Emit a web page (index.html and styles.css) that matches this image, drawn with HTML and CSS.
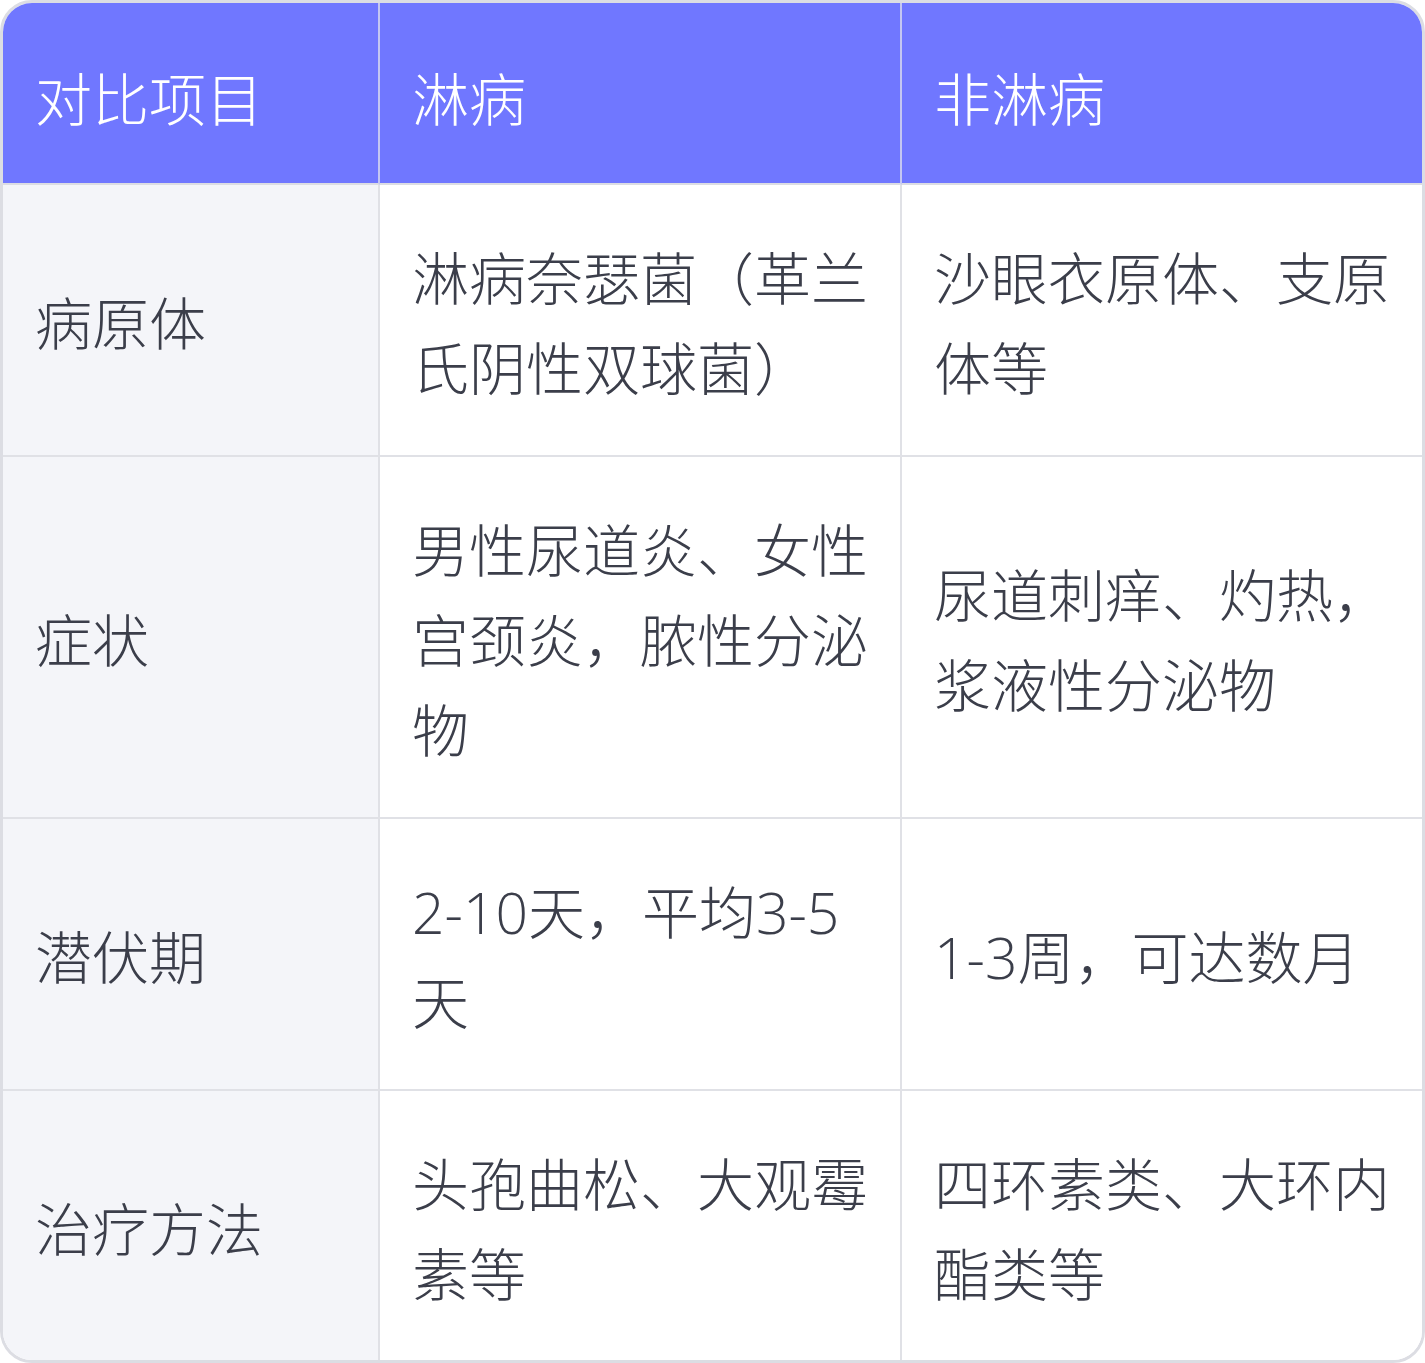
FILE: index.html
```html
<!DOCTYPE html>
<html lang="zh-CN">
<head>
<meta charset="utf-8">
<title>淋病与非淋病对比</title>
<link rel="stylesheet" href="styles.css">
</head>
<body>
<div class="table">
  <div class="cell head first">对比项目</div>
  <div class="cell head">淋病</div>
  <div class="cell head last">非淋病</div>

  <div class="cell label">病原体</div>
  <div class="cell">淋病奈瑟菌（革兰氏阴性双球菌）</div>
  <div class="cell last">沙眼衣原体、支原体等</div>

  <div class="cell label">症状</div>
  <div class="cell">男性尿道炎、女性宫颈炎，脓性分泌物</div>
  <div class="cell last">尿道刺痒、灼热，浆液性分泌物</div>

  <div class="cell label">潜伏期</div>
  <div class="cell">2-10天，平均3-5天</div>
  <div class="cell last">1-3周，可达数月</div>

  <div class="cell label bottom">治疗方法</div>
  <div class="cell bottom">头孢曲松、大观霉素等</div>
  <div class="cell last bottom">四环素类、大环内酯类等</div>
</div>
</body>
</html>
```

FILE: styles.css
```css
html, body {
  margin: 0;
  padding: 0;
  background: #ffffff;
}

.table {
  box-sizing: border-box;
  width: 1425px;
  height: 1363px;
  display: grid;
  grid-template-columns: 377px 522px 1fr;
  grid-template-rows: 182px 272px 362px 272px 1fr;
  border: 3px solid #dcdde3;
  border-radius: 32px;
  overflow: hidden;
  font-family: "Open Sans", "Noto Sans CJK SC", "Noto Sans", sans-serif;
  font-weight: 300;
  font-size: 57px;
  line-height: 90px;
  color: #3b3e4a;
}

.cell {
  box-sizing: border-box;
  display: flex;
  align-items: center;
  padding: 6px 26px 0 32px;
  border-right: 2px solid #e0e1e6;
  border-bottom: 2px solid #e0e1e6;
  background: #ffffff;
  word-break: break-all;
}

.cell.last {
  border-right: none;
}

.cell.bottom {
  border-bottom: none;
}

.cell.head {
  background: #7077ff;
  color: #ffffff;
  border-right-color: #c4c6f2;
  border-bottom: 2px solid #dcdde3;
  padding-top: 11px;
}

.cell.label {
  background: #f4f5f9;
}
```
